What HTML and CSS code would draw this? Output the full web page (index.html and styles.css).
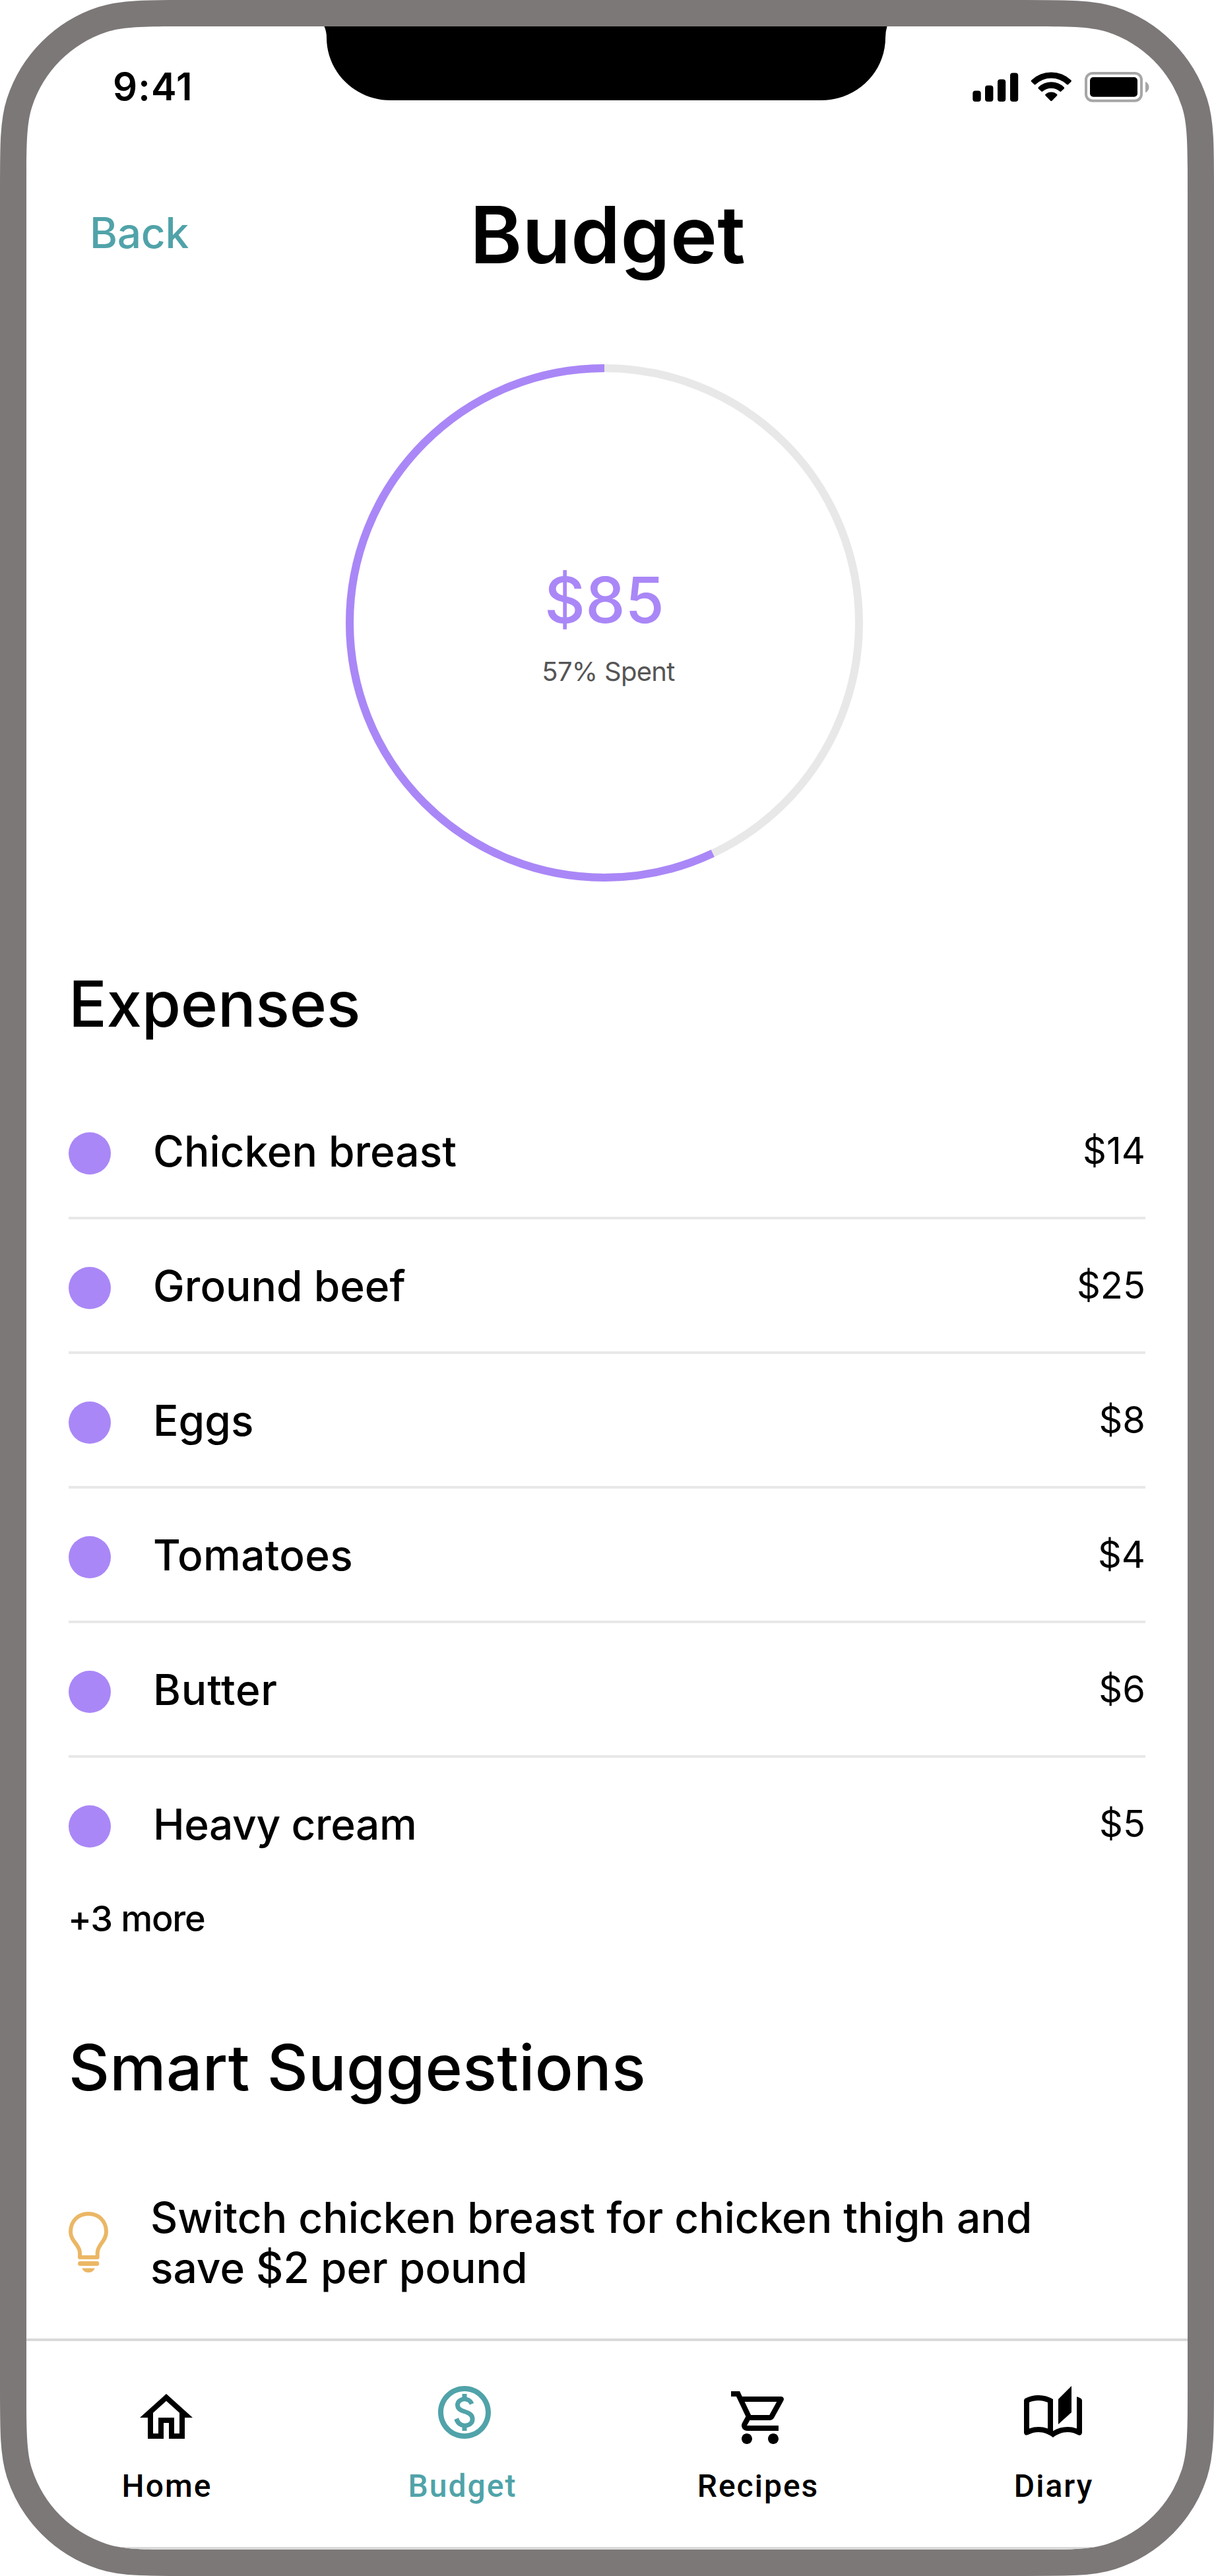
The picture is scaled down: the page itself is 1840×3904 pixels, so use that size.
FILE: index.html
```html
<!DOCTYPE html>
<html lang="en">
<head>
<meta charset="utf-8">
<title>Budget</title>
<link rel="stylesheet" href="styles.css">
</head>
<body>
<div class="phone">
  <svg class="frame" viewBox="0 0 1840 3904" aria-hidden="true">
    <defs>
      <path id="screen" d="M40 286c0-65.200 0-97.800 8.600-124.300A176 176 0 0 1 161.700 48.600C188.200 40 220.800 40 286 40H1554c65.200 0 97.800 0 124.300 8.600A176 176 0 0 1 1791.400 161.700C1800 188.200 1800 220.800 1800 286V3618c0 65.200 0 97.800-8.600 124.300A176 176 0 0 1 1678.300 3855.400C1651.800 3864 1619.200 3864 1554 3864H286c-65.200 0-97.800 0-124.300-8.600A176 176 0 0 1 48.600 3742.300C40 3715.800 40 3683.200 40 3618Z"/>
      <clipPath id="screen-clip"><use href="#screen"/></clipPath>
    </defs>
    <use href="#screen" fill="none" stroke="#7d7878" stroke-width="80"/>
    <use href="#screen" fill="#fff"/>
    <rect x="40" y="3860" width="1760" height="4" fill="#d9d9d9" clip-path="url(#screen-clip)"/>
    <path d="M491.500 40Q495 48 495 57C495 109 538 152 592 152H1245C1299 152 1342 109 1342 57Q1342 48 1344.500 40Z"/>
  </svg>

  <div class="status-bar">
    <span class="time">9:41</span>
    <svg class="status-icons" width="270" height="48" viewBox="0 0 270 48">
      <rect x="2.300" y="29.500" width="12.400" height="16.500" rx="4"/>
      <rect x="21" y="21.500" width="12.400" height="24.500" rx="4"/>
      <rect x="40" y="12.300" width="12.200" height="33.700" rx="4"/>
      <rect x="59" y="2.500" width="12.200" height="43.500" rx="4"/>
      <path d="M91.200 13.500A43.500 43.500 0 0 1 151.400 13.500Q152.400 14.800 151.300 15.900L146.700 20.300Q145.800 20.800 145 20A34.500 34.500 0 0 0 97.600 20Q96.800 20.800 95.900 20.300L91.300 15.900Q90.200 14.800 91.200 13.500Z"/>
      <path d="M101.800 24.200A28 28 0 0 1 140.800 24.200Q141.600 25.400 140.700 26.400L136 30.700Q135.200 31.400 134.300 30.600A19.500 19.500 0 0 0 108.300 30.600Q107.400 31.400 106.600 30.700L101.900 26.400Q101 25.400 101.800 24.200Z"/>
      <path d="M112.600 34.800A13 13 0 0 1 130 34.800Q131 35.800 130 37L122.400 44.700Q121.300 45.600 120.200 44.700L112.600 37Q111.600 35.800 112.600 34.800Z"/>
      <rect x="174" y="3" width="84" height="41.700" rx="10" fill="none" stroke="#a6a6a6" stroke-width="4"/>
      <rect x="180" y="9" width="72" height="29.700" rx="5"/>
      <path d="M264 15.700C267.500 17.200 269.500 20.200 269.500 24S267.500 30.800 264 32.300Z" fill="#a6a6a6"/>
    </svg>
  </div>

  <header class="header">
    <a class="back">Back</a>
    <h1 class="title">Budget</h1>
  </header>

  <section class="ring">
    <svg class="ring-chart" viewBox="0 0 784 784" aria-hidden="true">
      <circle cx="392" cy="392" r="386" fill="none" stroke="#e8e8e8" stroke-width="12"/>
      <circle cx="392" cy="392" r="386" fill="none" stroke="#aa87f7" stroke-width="12" pathLength="100" stroke-dasharray="57 43" transform="matrix(0 -1 -1 0 784 784)"/>
    </svg>
    <div class="amount">$85</div>
    <div class="spent">57% Spent</div>
  </section>

  <h2 class="heading expenses-heading">Expenses</h2>
  <ul class="expenses">
    <li class="expense"><span class="dot"></span><span class="name">Chicken breast</span><span class="price">$14</span></li>
    <li class="expense"><span class="dot"></span><span class="name">Ground beef</span><span class="price">$25</span></li>
    <li class="expense"><span class="dot"></span><span class="name">Eggs</span><span class="price">$8</span></li>
    <li class="expense"><span class="dot"></span><span class="name loose">Tomatoes</span><span class="price">$4</span></li>
    <li class="expense"><span class="dot"></span><span class="name looser">Butter</span><span class="price">$6</span></li>
    <li class="expense"><span class="dot"></span><span class="name tight">Heavy cream</span><span class="price">$5</span></li>
  </ul>
  <div class="more">+3 more</div>

  <h2 class="heading suggestions-heading">Smart Suggestions</h2>
  <div class="suggestion">
    <svg class="bulb" width="60" height="92" viewBox="0 0 60 92">
      <path d="M17 69V62C17 50 3 45 3 30.300C3 14.500 14 3 30 3S57 14.500 57 30.300C57 45 43.700 50 43.700 62V69Z" fill="none" stroke="#ebb765" stroke-width="6" stroke-linejoin="round"/>
      <rect x="14" y="75" width="32.300" height="7" rx="3.500" fill="#ebb765"/>
      <path d="M20.300 85.500H39.700C38 90 34.500 92 30 92S22 90 20.300 85.500Z" fill="#ebb765"/>
    </svg>
    <p class="suggestion-text">Switch chicken breast for chicken thigh and<br>save $2 per pound</p>
  </div>

  <nav class="nav">
    <a class="nav-item home">
      <svg class="nav-icon" viewBox="0 0 24 24"><path d="M12 5.690l5 4.500V18h-2v-6H9v6H7v-7.810l5-4.500M12 3L2 12h3v8h6v-6h2v6h6v-8h3L12 3z"/></svg>
      <span class="nav-label">Home</span>
    </a>
    <a class="nav-item budget">
      <svg class="nav-icon" viewBox="0 0 24 24"><path d="M12 2C6.480 2 2 6.480 2 12s4.480 10 10 10 10-4.480 10-10S17.520 2 12 2zm0 18c-4.410 0-8-3.590-8-8s3.590-8 8-8 8 3.590 8 8-3.590 8-8 8zm.89-8.900c-1.780-.59-2.640-.96-2.640-1.900 0-1.020 1.110-1.390 1.810-1.390 1.310 0 1.790.99 1.900 1.340l1.580-.67c-.15-.44-.82-1.910-2.660-2.230V5h-1.750v1.260c-2.600.56-2.620 2.850-2.620 2.960 0 2.270 2.250 2.910 3.350 3.310 1.580.56 2.280 1.070 2.280 2.030 0 1.130-1.050 1.610-1.980 1.610-1.820 0-2.340-1.870-2.400-2.090l-1.660.67c.63 2.190 2.280 2.780 3.020 2.960V19h1.750v-1.240c.52-.09 3.020-.59 3.020-3.220.01-1.390-.6-2.610-3-3.440z"/></svg>
      <span class="nav-label">Budget</span>
    </a>
    <a class="nav-item recipes">
      <svg class="nav-icon" viewBox="0 0 24 24"><path d="M15.550 13c.75 0 1.410-.41 1.750-1.030l3.580-6.490A.996.996 0 0 0 20.010 4H5.210l-.94-2H1v2h2l3.600 7.590-1.350 2.440C4.520 15.370 5.480 17 7 17h12v-2H7l1.100-2h7.450zM6.160 6h12.150l-2.760 5H8.530L6.160 6zM7 18c-1.100 0-1.990.9-1.990 2S5.900 22 7 22s2-.9 2-2-.9-2-2-2zm10 0c-1.100 0-1.990.9-1.990 2s.89 2 1.990 2 2-.9 2-2-.9-2-2-2z"/></svg>
      <span class="nav-label">Recipes</span>
    </a>
    <a class="nav-item diary">
      <svg class="nav-icon" viewBox="0 0 24 24"><path d="M22.470 5.200c-.47-.24-.96-.44-1.470-.61v12.030c-1.140-.41-2.310-.62-3.500-.62-1.900 0-3.780.54-5.500 1.580V5.480C10.380 4.550 8.510 4 6.500 4c-1.790 0-3.480.44-4.970 1.200-.33.16-.53.51-.53.880v12.080c0 .58.47.99 1 .99.160 0 .32-.04.480-.12C3.690 18.400 5.050 18 6.500 18c2.070 0 3.980.82 5.500 2 1.520-1.180 3.430-2 5.500-2 1.450 0 2.810.4 4.020 1.040.16.080.32.120.48.120.52 0 1-.41 1-.99V6.080c0-.37-.2-.72-.53-.88zM10 16.620C8.860 16.210 7.690 16 6.500 16s-2.360.21-3.500.62V6.710C4.110 6.240 5.280 6 6.500 6c1.200 0 2.390.25 3.500.72v9.900zM19 .5l-5 5V15l5-4.500V.5z"/></svg>
      <span class="nav-label">Diary</span>
    </a>
  </nav>
</div>
</body>
</html>
```

FILE: styles.css
```css
* {
  box-sizing: border-box;
}

body {
  margin: 0;
  background: #fff;
  color: #000;
  font-family: Inter, "Liberation Sans", sans-serif;
  font-weight: 500;
  font-optical-sizing: none;
}

h1,
h2,
p,
ul {
  margin: 0;
  padding: 0;
}

.phone {
  position: relative;
  isolation: isolate;
  display: flex;
  flex-direction: column;
  width: 1840px;
  height: 3904px;
  padding: 40px;
  overflow: hidden;
}

/* Device bezel and notch, painted behind the content */
.frame {
  position: absolute;
  inset: 0;
  z-index: -1;
  width: 1840px;
  height: 3904px;
}

.status-bar {
  display: flex;
  justify-content: space-between;
  height: 70px;
  margin-top: 56px;
  padding: 0 58px 0 131px;
}

.time {
  font-size: 58px;
  line-height: 70px;
  font-weight: 600;
  letter-spacing: 1.2px;
}

.status-icons {
  margin-top: 12px;
}

.header {
  display: grid;
  grid-template-columns: 1fr auto 1fr;
  align-items: start;
  height: 146px;
  margin-top: 117px;
  padding: 0 96px;
}

.back {
  margin-top: 31px;
  color: #50a3a9;
  font-size: 64px;
  line-height: 78px;
  letter-spacing: -0.3px;
}

.title {
  padding-left: 2px;
  font-size: 120px;
  line-height: 146px;
  font-weight: 600;
  letter-spacing: 0.3px;
}

.ring {
  display: flex;
  flex-direction: column;
  align-items: center;
  position: relative;
  width: 784px;
  height: 784px;
  margin: 123px 0 0 484px;
  padding-top: 299px;
}

.ring-chart {
  position: absolute;
  inset: 0;
}

.amount {
  color: #aa87f7;
  font-size: 96px;
  line-height: 116px;
}

.spent {
  margin-top: 26px;
  padding-left: 12px;
  color: #555;
  font-size: 40px;
  line-height: 49px;
  font-weight: 400;
  letter-spacing: -0.7px;
}

.heading {
  margin-left: 64px;
  font-size: 96px;
  line-height: 116px;
  font-weight: 500;
}

.expenses-heading {
  margin-top: 127px;
  letter-spacing: -0.3px;
}

.expenses {
  margin: 65px 64px 0;
  list-style: none;
}

.expense {
  display: flex;
  align-items: flex-start;
  height: 204px;
  border-bottom: 4px solid #e8e8e8;
}

.expense:last-child {
  border-bottom: 0;
}

.dot {
  width: 64px;
  height: 64px;
  margin: 72px 64px 0 0;
  border-radius: 50%;
  background: #aa87f7;
}

.name {
  flex: 1;
  margin-top: 62px;
  font-size: 64px;
  line-height: 78px;
}

.name.loose {
  letter-spacing: 0.3px;
}

.name.looser {
  letter-spacing: 0.8px;
}

.name.tight {
  letter-spacing: -0.4px;
}

.price {
  margin-top: 66px;
  font-size: 56px;
  line-height: 68px;
  font-weight: 400;
}

.more {
  margin: 6px 0 0 63px;
  font-size: 54px;
  line-height: 68px;
  letter-spacing: -1.2px;
}

.suggestions-heading {
  margin-top: 133px;
  letter-spacing: 0.3px;
}

.suggestion {
  display: flex;
  align-items: flex-start;
  gap: 64px;
  height: 221px;
  margin: 132px 64px 0;
}

.bulb {
  flex: none;
  margin-top: 29px;
}

.suggestion-text {
  font-size: 64px;
  line-height: 76px;
  white-space: nowrap;
}

.nav {
  display: flex;
  justify-content: space-between;
  height: 320px;
  padding: 0 52px 0 64px;
  border-top: 4px solid #d9d9d9;
}

.nav-item {
  display: flex;
  flex-direction: column;
  align-items: center;
  width: 300px;
  font-family: Roboto, sans-serif;
}

.nav-icon {
  width: 96px;
  height: 96px;
  margin-top: 68px;
  fill: currentColor;
}

.home .nav-icon {
  margin-right: 4px;
}

.budget {
  color: #50a3a9;
}

.budget .nav-icon {
  margin: 60px 0 8px 4px;
}

.recipes .nav-icon {
  margin-left: 4px;
}

.diary .nav-icon {
  margin: 66px 4px 2px 0;
}

.nav-label {
  margin: 28px 2px 0 0;
  font-size: 48px;
  line-height: 56px;
  letter-spacing: 2px;
}
```
